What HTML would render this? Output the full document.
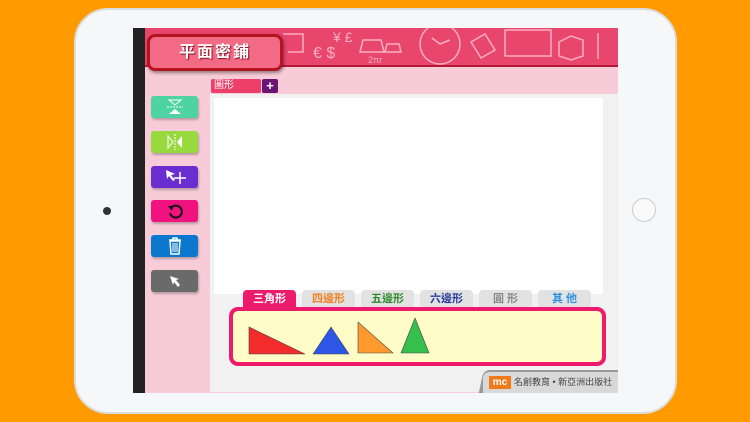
<!DOCTYPE html>
<html><head><meta charset="utf-8"><style>
*{margin:0;padding:0;box-sizing:border-box}
body{width:750px;height:422px;background:#FF9A00;position:relative;overflow:hidden;font-family:"Liberation Sans","Noto Sans CJK TC",sans-serif}
.ab{position:absolute}
.frame{left:74px;top:8px;width:603px;height:406px;border-radius:34px;background:#f6f7f9;border:2px solid #dcdcdc}
.screen{left:133px;top:28px;width:485px;height:365px;background:#F7CCD8;overflow:hidden}
.btn{position:absolute;left:18px;width:47px;height:22px;border-radius:3px;box-shadow:1px 2px 2px rgba(0,0,0,.25);display:flex;align-items:center;justify-content:center}
.tab{position:absolute;top:262px;height:18px;width:53px;background:#e2e2e2;border-radius:4px 4px 0 0;font-size:11px;font-weight:bold;text-align:center;line-height:18px}
</style></head><body>
<div class="ab frame"></div>
<div class="ab" style="left:632px;top:198px;width:24px;height:24px;border-radius:50%;border:1px solid #ccc;background:#fafafa"></div>
<div class="ab" style="left:103px;top:207px;width:8px;height:8px;border-radius:50%;background:#333"></div>
<div class="ab screen">
 <div class="ab" style="left:0;top:0;width:12px;height:365px;background:#222"></div>
 <div class="ab" style="left:12px;top:0;width:473px;height:39px;background:#E8466C;border-bottom:2px solid #B81838"></div>
 <svg class="ab" style="left:150px;top:0" width="335" height="38" fill="none" stroke="#F9AFC0" stroke-width="1.5">
  <path d="M0 6h20v18h-15"/><text x="30" y="30" fill="#F9AFC0" stroke="none" font-size="16">€ $</text><text x="50" y="14" fill="#F9AFC0" stroke="none" font-size="14">¥ £</text>
  <path d="M80 12h18l3 12h-24z"/><path d="M104 16h12l2 8h-16z"/><text x="85" y="35" fill="#F9AFC0" stroke="none" font-size="9">2πr</text>
  <circle cx="157" cy="16" r="20"/><path d="M157 16l-8-6M157 16l10-4"/>
  <path d="M188 14l14-8 10 16-14 8z"/><path d="M222 2h46v26h-46z"/><path d="M276 14l12-6 12 4v16l-12 4-12-4z"/><path d="M315 5v26"/>
 </svg>
 <div class="ab" style="left:14px;top:6px;width:136px;height:37px;background:#F26A86;border:3px solid #B5141F;border-radius:8px;box-shadow:1px 2px 3px rgba(0,0,0,.4);color:#fff;font-weight:bold;font-size:16px;text-align:center;line-height:31px;letter-spacing:2px;text-shadow:1px 1px 1px #8a1020">平面密鋪</div>
 <div class="ab" style="left:77px;top:66px;width:410px;height:298px;background:#f1f1f1"></div>
 <div class="ab" style="left:78px;top:51px;width:50px;height:14px;background:#EC3F69;border-radius:2px;color:#fff;font-size:10px;line-height:14px;padding-left:3px">圖形</div>
 <div class="ab" style="left:129px;top:51px;width:16px;height:14px;background:#6A1474;border-radius:2px;color:#fff;font-size:13px;font-weight:bold;line-height:13px;text-align:center">+</div>
 <div class="ab" style="left:81px;top:70px;width:389px;height:196px;background:#fff"></div>
 <div class="btn" style="top:68px;background:#4DD3A4"><svg width="16" height="16"><path d="M2 1h12L8 6z" fill="none" stroke="#fff"/><path d="M0 8h16" stroke="#fff" stroke-dasharray="2 1"/><path d="M2 15h12L8 10z" fill="#fff"/></svg></div>
 <div class="btn" style="top:103px;background:#98D93E"><svg width="16" height="16"><path d="M1 2v12L6 8z" fill="none" stroke="#fff"/><path d="M8 0v16" stroke="#fff" stroke-dasharray="2 1"/><path d="M15 2v12L10 8z" fill="#fff"/></svg></div>
 <div class="btn" style="top:138px;background:#6A2ED0"><svg width="22" height="16"><path d="M2 1l9 4-4 1 4 5-2 1-4-5-2 3z" fill="#fff"/><path d="M16 3v12M10 9h12" stroke="#fff" stroke-width="1.5"/></svg></div>
 <div class="btn" style="top:172px;background:#F0127F"><svg width="16" height="16"><path d="M4 5a6 6 0 1 1-1 5" fill="none" stroke="#111" stroke-width="2"/><path d="M1 3l5 0-1 5z" fill="#111"/></svg></div>
 <div class="btn" style="top:207px;background:#0B78CE"><svg width="14" height="18"><path d="M1 3h12M5 3V1h4v2M2 4l1 13h8l1-13z" fill="none" stroke="#fff" stroke-width="1.4"/><path d="M5 6v9M7 6v9M9 6v9" stroke="#fff"/></svg></div>
 <div class="btn" style="top:242px;background:#6a6a6a"><svg width="14" height="14"><path d="M2 2l9 3-3 1 4 5-2 2-4-5-1 3z" fill="#fff"/></svg></div>
 <div class="tab" style="left:110px;background:#EC1B6B;color:#fff">三角形</div>
 <div class="tab" style="left:169px;color:#F08020">四邊形</div>
 <div class="tab" style="left:228px;color:#2E8B2E">五邊形</div>
 <div class="tab" style="left:287px;color:#283C9A">六邊形</div>
 <div class="tab" style="left:346px;color:#888">圓 形</div>
 <div class="tab" style="left:405px;color:#2A90E0">其 他</div>
 <div class="ab" style="left:96px;top:279px;width:377px;height:59px;background:#FFFCC8;border:4px solid #EC1B6B;border-radius:9px"></div>
 <svg class="ab" style="left:110px;top:288px" width="200" height="40"><path d="M6 11L62 38H6z" fill="#F22B2B" stroke="#444" stroke-width=".6"/><path d="M70 38L88 11 106 38z" fill="#2E56E6" stroke="#444" stroke-width=".6"/><path d="M115 37V6l35 31z" fill="#FF9A2E" stroke="#444" stroke-width=".6"/><path d="M158 37L172 2 186 37z" fill="#35C04C" stroke="#444" stroke-width=".6"/></svg>
 <div class="ab" style="left:348px;top:342px;width:140px;height:25px;background:#9a9a9a;border-radius:6px 0 0 0;transform:skewX(-12deg)"></div>
 <div class="ab" style="left:350px;top:344px;width:140px;height:23px;background:#d9d9d9;border-radius:6px 0 0 0"></div>
 <div class="ab" style="left:356px;top:348px;width:22px;height:13px;background:#F07A1A;color:#fff;font-size:10px;font-weight:bold;text-align:center;line-height:13px">mc</div>
 <div class="ab" style="left:381px;top:348px;font-size:9px;color:#444;line-height:13px;white-space:nowrap">名創教育 • 新亞洲出版社</div>
</div>
</body></html>
